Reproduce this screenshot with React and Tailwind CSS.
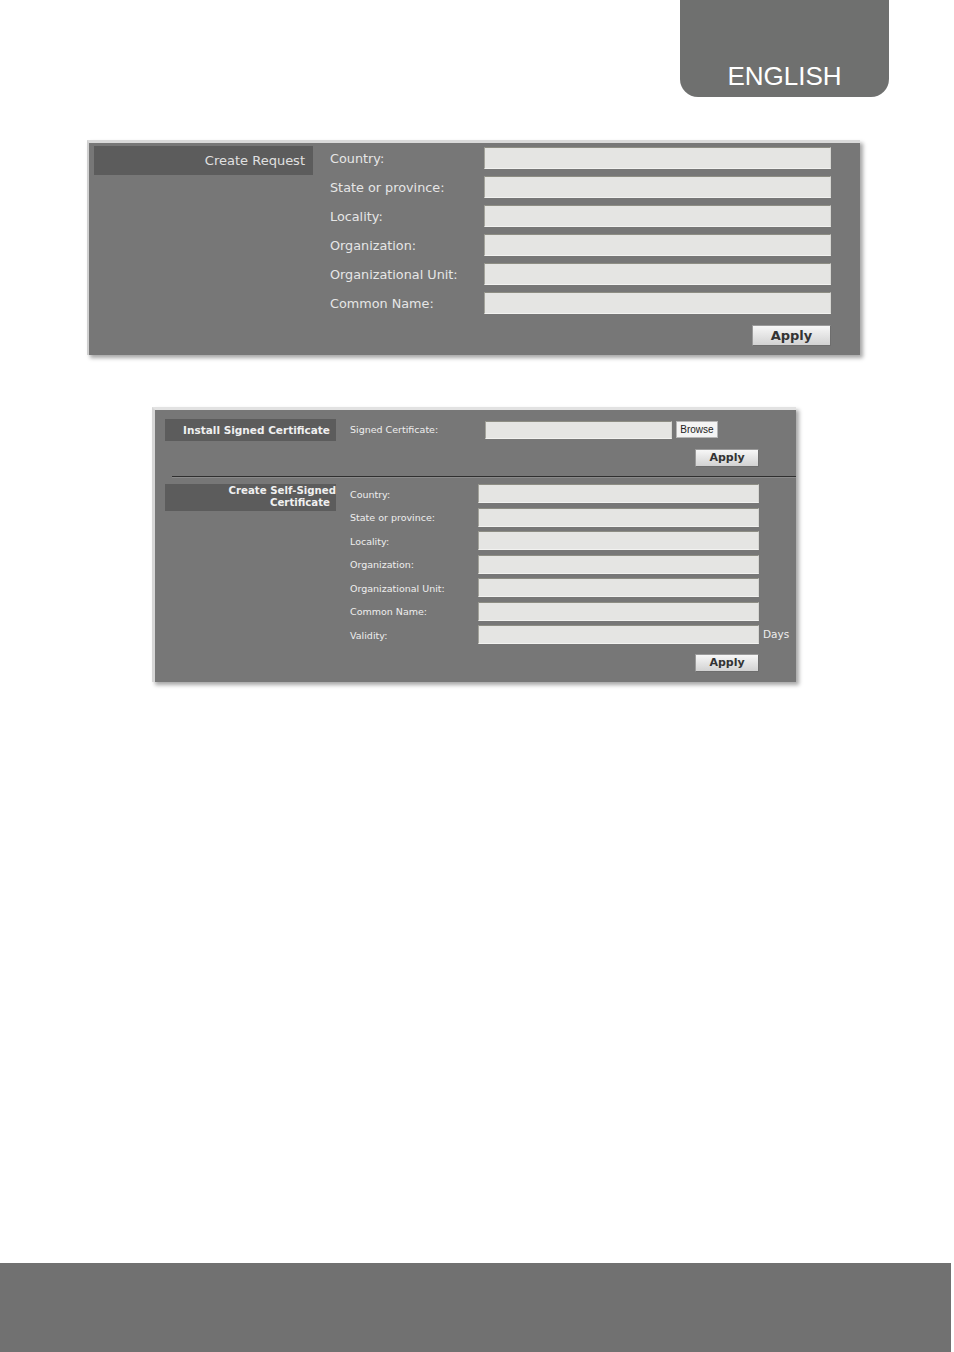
import React from "react";

const requestFields = ["Country:", "State or province:", "Locality:", "Organization:", "Organizational Unit:", "Common Name:"];
const selfFields = ["Country:", "State or province:", "Locality:", "Organization:", "Organizational Unit:", "Common Name:", "Validity:"];

const uiFont = { fontFamily: '"DejaVu Sans", Verdana, sans-serif' };

function Field({ className = "" }) {
  return (
    <div
      className={`bg-[#e5e5e3] border border-t-[#8d8d84] border-l-[#a3a39b] border-b-[#f2f2f0] border-r-[#d6d6d2] ${className}`}
    />
  );
}

function ApplyButton({ className = "" }) {
  return (
    <button
      type="button"
      className={`flex items-center justify-center bg-gradient-to-b from-[#f7f7f7] to-[#d2d2d2] border border-[#9a9a9a] border-b-[#6e6e6e] border-r-[#6e6e6e] font-bold text-[#333] ${className}`}
    >
      Apply
    </button>
  );
}

function CreateRequest() {
  return (
    <div
      style={uiFont}
      className="ml-[87px] mt-[43px] w-[773px] h-[215px] bg-[#777777] border-t-[3px] border-l-[2px] border-t-[#dadada] border-l-[#cfcfcf] shadow-[3px_3px_4px_rgba(0,0,0,0.35)] pt-[3px] pl-[5px]"
    >
      <div className="flex">
        <div className="w-[219px] h-[29px] bg-[#5c5c5c] text-right pr-[8px] text-[13px] leading-[29px] text-[#e0e0e0]">
          Create Request
        </div>
        <div className="ml-[17px] pt-[1px] flex flex-col">
          <div className="flex flex-col gap-[7px]">
            {requestFields.map((f) => (
              <div key={f} className="flex items-center h-[22px]">
                <span className="w-[154px] text-[12.8px] text-[#e6e6e6] mt-[2px]">{f}</span>
                <Field className="w-[347px] h-[22px]" />
              </div>
            ))}
          </div>
          <div className="flex justify-end mt-[11px]">
            <ApplyButton className="w-[79px] h-[21px] text-[13px]" />
          </div>
        </div>
      </div>
    </div>
  );
}

function Certificates() {
  return (
    <div
      style={uiFont}
      className="ml-[152px] mt-[52px] w-[644px] h-[275px] bg-[#777777] border-t-[3px] border-l-[3px] border-t-[#e2e2e2] border-l-[#d6d6d6] shadow-[3px_3px_4px_rgba(0,0,0,0.35)] pt-[9px]"
    >
      <div className="flex pl-[10px]">
        <div className="w-[171px] h-[22px] bg-[#5c5c5c] text-right pr-[6px] text-[10.5px] font-bold leading-[22px] text-[#f0f0f0]">
          Install Signed Certificate
        </div>
        <div className="ml-[14px] flex flex-col">
          <div className="flex items-center h-[19px] mt-[1px]">
            <span className="w-[135px] text-[9.5px] text-[#eeeeee] mt-[2px]">Signed Certificate:</span>
            <Field className="w-[187px] h-[18px]" />
            <div
              style={{ fontFamily: '"Liberation Sans", Arial, sans-serif' }}
              className="ml-[4px] w-[42px] h-[17px] bg-[#f4f4f4] border border-[#b5b5b5] text-[10px] leading-[15px] text-center text-[#222]"
            >
              Browse
            </div>
          </div>
          <div className="flex justify-end w-[409px] mt-[10px]">
            <ApplyButton className="w-[64px] h-[18px] text-[11px]" />
          </div>
        </div>
      </div>

      <div className="ml-[17px] mt-[9px] h-[2px] border-t border-t-[#2f2f2f] border-b border-b-[#8a8a8a]" />

      <div className="flex pl-[10px] mt-[6px]">
        <div className="w-[171px] h-[27px] bg-[#5c5c5c] text-right pr-[0px] text-[10.2px] font-bold leading-[12px] pt-[1px] text-[#f0f0f0]">
          Create Self-Signed
          <br />
          <span className="pr-[6px]">Certificate</span>
        </div>
        <div className="ml-[14px] flex flex-col">
          <div className="flex flex-col gap-[4.5px]">
            {selfFields.map((f) => (
              <div key={f} className="flex items-center h-[19px]">
                <span className="w-[128px] text-[9.5px] text-[#eeeeee] mt-[3px]">{f}</span>
                <Field className="w-[281px] h-[19px]" />
                {f === "Validity:" && <span className="ml-[4px] text-[10.5px] text-[#eeeeee]">Days</span>}
              </div>
            ))}
          </div>
          <div className="flex justify-end w-[409px] mt-[10px]">
            <ApplyButton className="w-[64px] h-[18px] text-[11px]" />
          </div>
        </div>
      </div>
    </div>
  );
}

export default function App() {
  return (
    <div className="w-[954px] h-[1352px] bg-white flex flex-col">
      <div className="flex justify-end pr-[65px]">
        <div
          style={{ fontFamily: '"Liberation Sans", Arial, sans-serif' }}
          className="w-[209px] h-[97px] bg-[#6f706f] rounded-b-[18px] flex items-end justify-center pb-[1px] text-[26px] text-white"
        >
          ENGLISH
        </div>
      </div>

      <CreateRequest />
      <Certificates />

      <div className="mt-auto h-[89px] w-[951px] bg-[#717171]" />
    </div>
  );
}
